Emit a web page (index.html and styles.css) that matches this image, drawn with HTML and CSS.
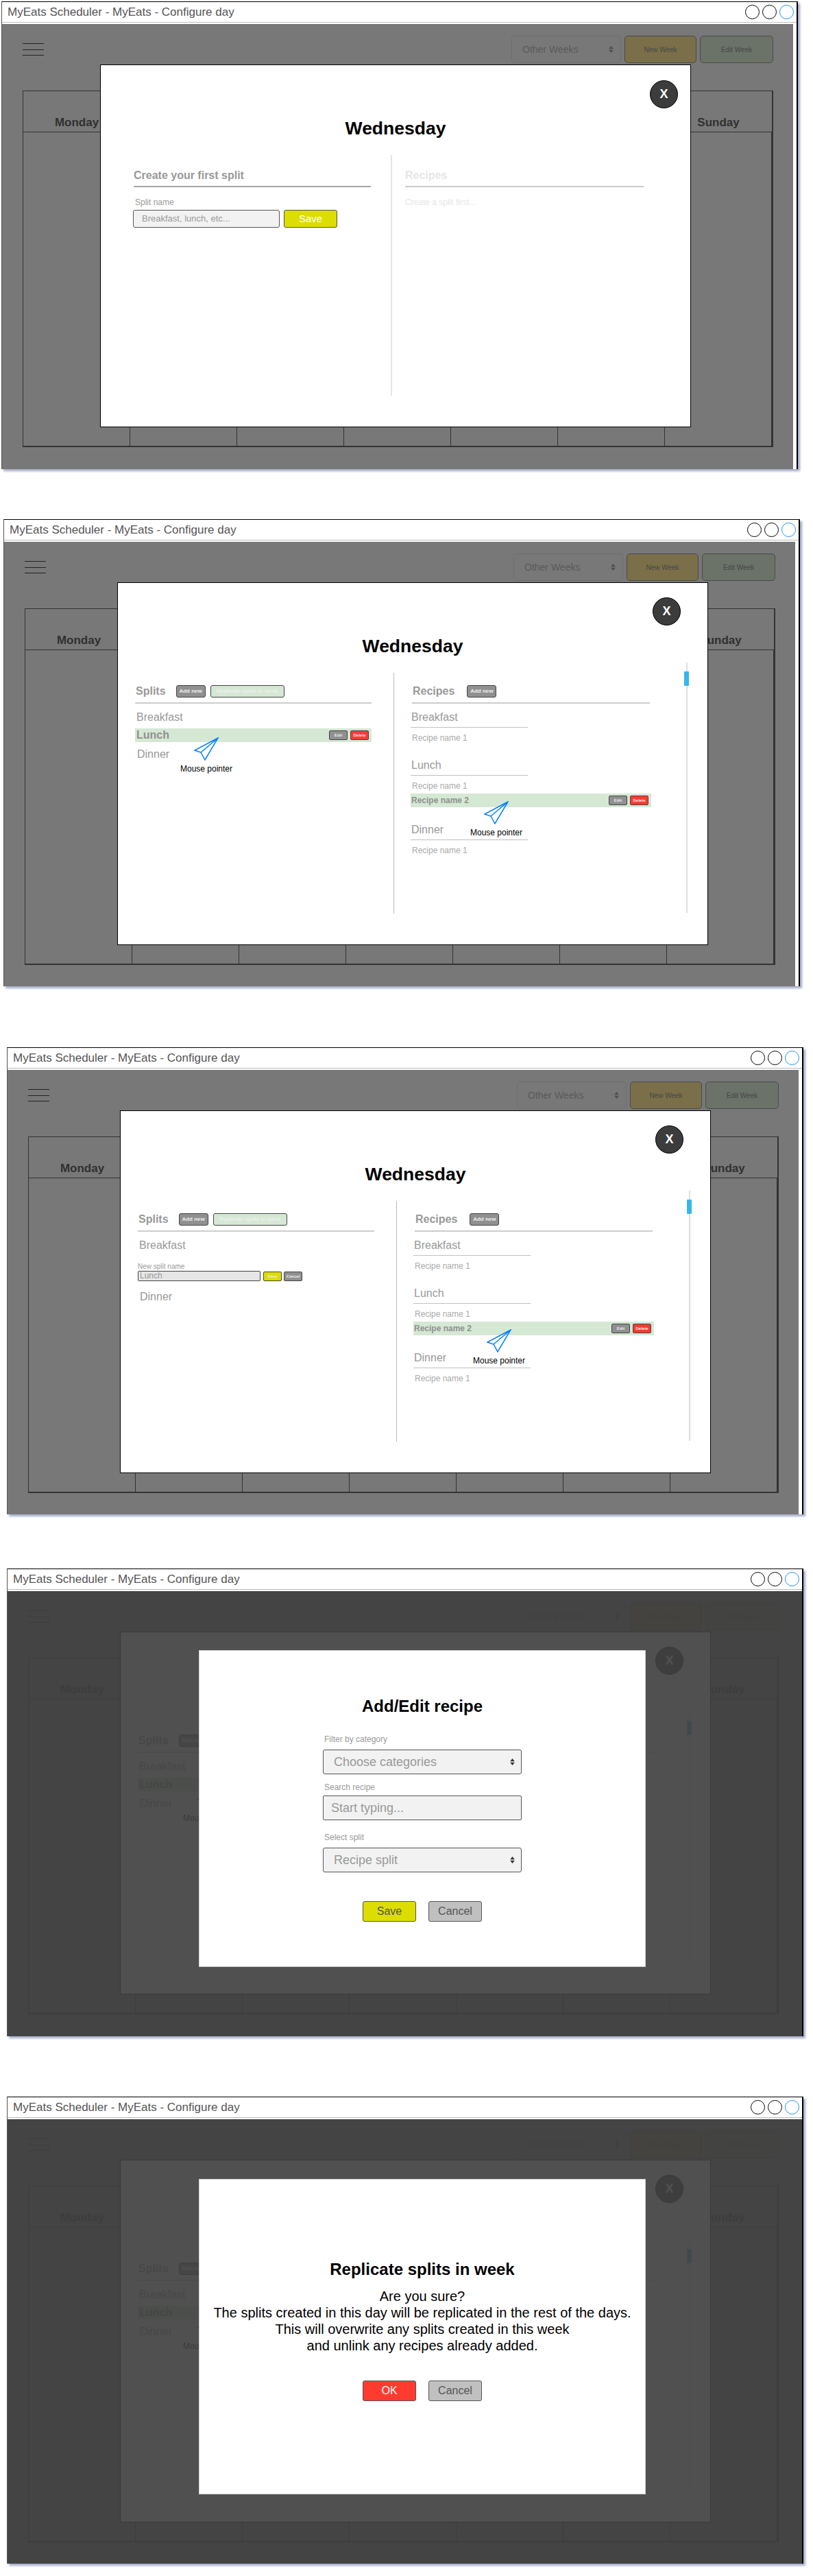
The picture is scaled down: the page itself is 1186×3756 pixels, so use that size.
FILE: index.html
```html
<!DOCTYPE html>
<html lang="en">
<head>
<meta charset="utf-8">
<title>MyEats Scheduler - Configure day</title>
<link rel="stylesheet" href="styles.css">
</head>
<body>

<section class="frame f1">
  <header class="titlebar"><span class="title-text">MyEats Scheduler - MyEats - Configure day</span><span class="dots"><i class="dot"></i><i class="dot"></i><i class="dot dot-blue"></i></span></header>
  <div class="content">
    <div class="toolbar">
      <div class="burger"><i></i><i></i><i></i></div>
      <div class="tools">
        <div class="week-select"><span>Other Weeks</span><svg class="updown" viewBox="0 0 8 12"><path d="M4 0 8 5H0ZM4 12 0 7H8Z"/></svg></div>
        <div class="tool-btn tool-new">New Week</div>
        <div class="tool-btn tool-edit">Edit Week</div>
      </div>
    </div>
    <div class="week">
      <div class="day">Monday</div><div class="day"></div><div class="day"></div><div class="day"></div><div class="day"></div><div class="day"></div><div class="day">Sunday</div>
      <div class="cell"></div><div class="cell"></div><div class="cell"></div><div class="cell"></div><div class="cell"></div><div class="cell"></div><div class="cell"></div>
    </div>
    <div class="modal modal-first">
      <div class="close close-first">X</div>
      <h2 class="modal-title">Wednesday</h2>
      <div class="cols cols-first">
        <div class="col-left">
          <h3 class="first-head">Create your first split</h3>
          <div class="first-label">Split name</div>
          <div class="first-form"><div class="first-input">Breakfast, lunch, etc...</div><div class="first-save">Save</div></div>
        </div>
        <div class="col-right">
          <h3 class="first-head first-head-off">Recipes</h3>
          <div class="first-label first-label-off">Create a split first...</div>
        </div>
      </div>
    </div>
  </div>
</section>

<section class="frame f2">
  <header class="titlebar"><span class="title-text">MyEats Scheduler - MyEats - Configure day</span><span class="dots"><i class="dot"></i><i class="dot"></i><i class="dot dot-blue"></i></span></header>
  <div class="content">
    <div class="toolbar">
      <div class="burger"><i></i><i></i><i></i></div>
      <div class="tools">
        <div class="week-select"><span>Other Weeks</span><svg class="updown" viewBox="0 0 8 12"><path d="M4 0 8 5H0ZM4 12 0 7H8Z"/></svg></div>
        <div class="tool-btn tool-new">New Week</div>
        <div class="tool-btn tool-edit">Edit Week</div>
      </div>
    </div>
    <div class="week">
      <div class="day">Monday</div><div class="day"></div><div class="day"></div><div class="day"></div><div class="day"></div><div class="day"></div><div class="day">Sunday</div>
      <div class="cell"></div><div class="cell"></div><div class="cell"></div><div class="cell"></div><div class="cell"></div><div class="cell"></div><div class="cell"></div>
    </div>
    <div class="modal">
      <div class="close">X</div>
      <h2 class="modal-title">Wednesday</h2>
      <div class="cols">
        <div class="col-left">
          <div class="panel-head"><h3 class="panel-title">Splits</h3><span class="mini mini-grey">Add new</span><span class="mini mini-green">Replicate splits in week</span></div>
          <div class="split-list">
            <div class="split">Breakfast</div>
            <div class="split split-hover"><b>Lunch</b><span class="row-btns"><span class="tiny tiny-grey">Edit</span><span class="tiny tiny-red">Delete</span></span></div>
            <div class="split split-dinner">Dinner</div>
          </div>
        </div>
        <div class="col-right">
          <div class="panel-head"><h3 class="panel-title panel-title-wide">Recipes</h3><span class="mini mini-grey">Add new</span></div>
          <div class="recipes">
            <div class="group"><h4 class="group-name">Breakfast</h4><div class="recipe">Recipe name 1</div></div>
            <div class="group"><h4 class="group-name">Lunch</h4><div class="recipe">Recipe name 1</div><div class="recipe recipe-hover"><b>Recipe name 2</b><span class="row-btns"><span class="tiny tiny-grey">Edit</span><span class="tiny tiny-red">Delete</span></span></div></div>
            <div class="group"><h4 class="group-name">Dinner</h4><div class="recipe">Recipe name 1</div></div>
          </div>
        </div>
      </div>
      <div class="track"><div class="thumb"></div></div>
      <div class="cursor cursor-split"><svg class="arrow" viewBox="0 0 36 34"><path d="M35 1 1 19 10 22 16 33ZM35 1 10 22"/></svg><span class="cursor-label">Mouse pointer</span></div>
      <div class="cursor cursor-recipe"><svg class="arrow" viewBox="0 0 36 34"><path d="M35 1 1 19 10 22 16 33ZM35 1 10 22"/></svg><span class="cursor-label">Mouse pointer</span></div>
    </div>
  </div>
</section>

<section class="frame f3">
  <header class="titlebar"><span class="title-text">MyEats Scheduler - MyEats - Configure day</span><span class="dots"><i class="dot"></i><i class="dot"></i><i class="dot dot-blue"></i></span></header>
  <div class="content">
    <div class="toolbar">
      <div class="burger"><i></i><i></i><i></i></div>
      <div class="tools">
        <div class="week-select"><span>Other Weeks</span><svg class="updown" viewBox="0 0 8 12"><path d="M4 0 8 5H0ZM4 12 0 7H8Z"/></svg></div>
        <div class="tool-btn tool-new">New Week</div>
        <div class="tool-btn tool-edit">Edit Week</div>
      </div>
    </div>
    <div class="week">
      <div class="day">Monday</div><div class="day"></div><div class="day"></div><div class="day"></div><div class="day"></div><div class="day"></div><div class="day">Sunday</div>
      <div class="cell"></div><div class="cell"></div><div class="cell"></div><div class="cell"></div><div class="cell"></div><div class="cell"></div><div class="cell"></div>
    </div>
    <div class="modal modal-b">
      <div class="close">X</div>
      <h2 class="modal-title">Wednesday</h2>
      <div class="cols">
        <div class="col-left">
          <div class="panel-head"><h3 class="panel-title">Splits</h3><span class="mini mini-grey">Add new</span><span class="mini mini-green">Replicate splits in week</span></div>
          <div class="split-list">
            <div class="split">Breakfast</div>
            <div class="split-form">
              <div class="split-form-label">New split name</div>
              <div class="split-form-row"><div class="split-input">Lunch</div><span class="tiny tiny-yellow">Save</span><span class="tiny tiny-grey">Cancel</span></div>
            </div>
            <div class="split split-dinner">Dinner</div>
          </div>
        </div>
        <div class="col-right">
          <div class="panel-head"><h3 class="panel-title panel-title-wide">Recipes</h3><span class="mini mini-grey">Add new</span></div>
          <div class="recipes">
            <div class="group"><h4 class="group-name">Breakfast</h4><div class="recipe">Recipe name 1</div></div>
            <div class="group"><h4 class="group-name">Lunch</h4><div class="recipe">Recipe name 1</div><div class="recipe recipe-hover"><b>Recipe name 2</b><span class="row-btns"><span class="tiny tiny-grey">Edit</span><span class="tiny tiny-red">Delete</span></span></div></div>
            <div class="group"><h4 class="group-name">Dinner</h4><div class="recipe">Recipe name 1</div></div>
          </div>
        </div>
      </div>
      <div class="track"><div class="thumb"></div></div>
      <div class="cursor cursor-recipe"><svg class="arrow" viewBox="0 0 36 34"><path d="M35 1 1 19 10 22 16 33ZM35 1 10 22"/></svg><span class="cursor-label">Mouse pointer</span></div>
    </div>
  </div>
</section>

<section class="frame frame-dim f4">
  <header class="titlebar"><span class="title-text">MyEats Scheduler - MyEats - Configure day</span><span class="dots"><i class="dot"></i><i class="dot"></i><i class="dot dot-blue"></i></span></header>
  <div class="content">
    <div class="toolbar">
      <div class="burger"><i></i><i></i><i></i></div>
      <div class="tools">
        <div class="week-select"><span>Other Weeks</span><svg class="updown" viewBox="0 0 8 12"><path d="M4 0 8 5H0ZM4 12 0 7H8Z"/></svg></div>
        <div class="tool-btn tool-new">New Week</div>
        <div class="tool-btn tool-edit">Edit Week</div>
      </div>
    </div>
    <div class="week">
      <div class="day">Monday</div><div class="day"></div><div class="day"></div><div class="day"></div><div class="day"></div><div class="day"></div><div class="day">Sunday</div>
      <div class="cell"></div><div class="cell"></div><div class="cell"></div><div class="cell"></div><div class="cell"></div><div class="cell"></div><div class="cell"></div>
    </div>
    <div class="modal modal-b">
      <div class="close">X</div>
      <h2 class="modal-title"></h2>
      <div class="cols">
        <div class="col-left">
          <div class="panel-head"><h3 class="panel-title">Splits</h3><span class="mini mini-grey">Add new</span></div>
          <div class="split-list">
            <div class="split">Breakfast</div>
            <div class="split split-hover"><b>Lunch</b></div>
            <div class="split split-dinner">Dinner</div>
          </div>
        </div>
        <div class="col-right"><div class="panel-head"></div></div>
      </div>
      <div class="track"><div class="thumb"></div></div>
      <div class="cursor cursor-split"><svg class="arrow" viewBox="0 0 36 34"><path d="M35 1 1 19 10 22 16 33ZM35 1 10 22"/></svg><span class="cursor-label">Mouse pointer</span></div>
    </div>
  </div>
  <div class="scrim">
    <div class="dialog dialog-recipe">
      <h2 class="dialog-title">Add/Edit recipe</h2>
      <div class="form">
        <label class="form-label">Filter by category</label>
        <div class="field field-select"><span>Choose categories</span><svg class="updown updown-dark" viewBox="0 0 8 12"><path d="M4 0 8 5H0ZM4 12 0 7H8Z"/></svg></div>
        <label class="form-label form-label-search">Search recipe</label>
        <div class="field field-input"><span>Start typing...</span></div>
        <label class="form-label form-label-split">Select split</label>
        <div class="field field-select"><span>Recipe split</span><svg class="updown updown-dark" viewBox="0 0 8 12"><path d="M4 0 8 5H0ZM4 12 0 7H8Z"/></svg></div>
      </div>
      <div class="dialog-actions"><div class="action action-yellow">Save</div><div class="action action-grey">Cancel</div></div>
    </div>
  </div>
</section>

<section class="frame frame-dim f5">
  <header class="titlebar"><span class="title-text">MyEats Scheduler - MyEats - Configure day</span><span class="dots"><i class="dot"></i><i class="dot"></i><i class="dot dot-blue"></i></span></header>
  <div class="content">
    <div class="toolbar">
      <div class="burger"><i></i><i></i><i></i></div>
      <div class="tools">
        <div class="week-select"><span>Other Weeks</span><svg class="updown" viewBox="0 0 8 12"><path d="M4 0 8 5H0ZM4 12 0 7H8Z"/></svg></div>
        <div class="tool-btn tool-new">New Week</div>
        <div class="tool-btn tool-edit">Edit Week</div>
      </div>
    </div>
    <div class="week">
      <div class="day">Monday</div><div class="day"></div><div class="day"></div><div class="day"></div><div class="day"></div><div class="day"></div><div class="day">Sunday</div>
      <div class="cell"></div><div class="cell"></div><div class="cell"></div><div class="cell"></div><div class="cell"></div><div class="cell"></div><div class="cell"></div>
    </div>
    <div class="modal modal-b">
      <div class="close">X</div>
      <h2 class="modal-title"></h2>
      <div class="cols">
        <div class="col-left">
          <div class="panel-head"><h3 class="panel-title">Splits</h3><span class="mini mini-grey">Add new</span></div>
          <div class="split-list">
            <div class="split">Breakfast</div>
            <div class="split split-hover"><b>Lunch</b></div>
            <div class="split split-dinner">Dinner</div>
          </div>
        </div>
        <div class="col-right"><div class="panel-head"></div></div>
      </div>
      <div class="track"><div class="thumb"></div></div>
      <div class="cursor cursor-split"><svg class="arrow" viewBox="0 0 36 34"><path d="M35 1 1 19 10 22 16 33ZM35 1 10 22"/></svg><span class="cursor-label">Mouse pointer</span></div>
    </div>
  </div>
  <div class="scrim">
    <div class="dialog dialog-confirm">
      <h2 class="dialog-title">Replicate splits in week</h2>
      <p class="confirm-text">Are you sure?<br>The splits created in this day will be replicated in the rest of the days.<br>This will overwrite any splits created in this week<br>and unlink any recipes already added.</p>
      <div class="dialog-actions dialog-actions-confirm"><div class="action action-red">OK</div><div class="action action-grey">Cancel</div></div>
    </div>
  </div>
</section>

</body>
</html>
```
FILE: styles.css
```css
* { box-sizing: border-box; }
html, body { margin: 0; padding: 0; background: #fff; }
body { height: 3756px; font-family: "Liberation Sans", Arial, sans-serif; overflow: hidden; }
h2, h3, h4, p { margin: 0; }

.frame {
  position: relative;
  width: 1162px;
  display: flex;
  flex-direction: column;
  background: #fff;
  border-top: 1px solid #000;
  border-left: 1px solid #555;
  border-right: 2px solid #000;
  box-shadow: 3px 3px 3px #a4abc8;
}
.f1 { margin: 2px 0 0 2px; height: 682px; }
.f2 { margin: 73px 0 0 5px; height: 681px; }
.f3 { margin: 89px 0 0 10px; height: 681px; }
.f4 { margin: 79px 0 0 10px; height: 682px; }
.f5 { margin: 88px 0 0 10px; height: 681px; }

.titlebar {
  flex: none;
  height: 30px;
  margin-bottom: 2px;
  padding: 0 4px 0 8px;
  display: flex;
  align-items: center;
  justify-content: space-between;
  border-bottom: 1px solid #bbb;
}
.title-text { font-size: 17px; color: #555; white-space: nowrap; }
.dots { display: flex; gap: 4px; }
.dot { display: block; width: 21px; height: 21px; border: 1px solid #000; border-radius: 50%; background: #fff; }
.dot-blue { border-color: #1e90ff; }

.content {
  position: relative;
  flex: 1;
  background: #787878;
  border-right: 5px solid #fff;
  padding: 17px 29px 0 30px;
  overflow: hidden;
}
.frame-dim .content { border-right-color: #787878; }

.toolbar { display: flex; justify-content: space-between; align-items: center; height: 40px; }
.burger { width: 31px; height: 18px; display: flex; flex-direction: column; justify-content: space-between; }
.burger i { display: block; height: 1px; background: #222; }
.tools { display: flex; gap: 5px; }
.week-select {
  width: 160px;
  height: 40px;
  padding: 0 10px 0 15px;
  display: flex;
  align-items: center;
  justify-content: space-between;
  border: 1px solid #6e6e6e;
  border-radius: 5px;
  font-size: 14px;
  color: #5a5a5a;
}
.updown { width: 7px; height: 10px; fill: #4e4e4e; }
.tool-btn {
  height: 40px;
  display: flex;
  align-items: center;
  justify-content: center;
  border: 1px solid #4a4a4a;
  border-radius: 5px;
  font-size: 10px;
  color: #474747;
}
.tool-new { width: 105px; background: #7a6f49; }
.tool-edit { width: 107px; background: #6b7268; }

.week {
  margin-top: 40px;
  width: 1095px;
  height: 520px;
  display: grid;
  grid-template-columns: repeat(7, 156px);
  grid-template-rows: 60px 1fr;
  border: 1px solid #333;
  border-right-width: 2px;
  border-bottom-width: 2px;
}
.day {
  display: flex;
  align-items: flex-end;
  justify-content: center;
  padding-bottom: 3px;
  line-height: 20px;
  font-size: 17px;
  font-weight: bold;
  color: #303030;
  border-bottom: 1px solid #333;
}
.cell { border-right: 1px solid #333; }

.modal {
  position: absolute;
  left: 165px;
  top: 59px;
  width: 862px;
  height: 529px;
  background: #fff;
  border: 1px solid #000;
}
.modal-first { left: 143px; }
.modal-b { left: 164px; }
.close {
  position: absolute;
  left: 780px;
  top: 21px;
  width: 41px;
  height: 41px;
  border-radius: 50%;
  background: #3c3c3c;
  border: 1px solid #000;
  display: flex;
  align-items: center;
  justify-content: center;
  color: #fff;
  font-size: 18px;
  font-weight: bold;
}
.close-first { left: 801px; top: 22px; }
.modal-title {
  margin-top: 77px;
  height: 30px;
  line-height: 30px;
  text-align: center;
  font-size: 26.5px;
  color: #000;
}
.cols { display: flex; height: 351px; margin-top: 24px; padding-left: 25px; }
.col-left { width: 345px; margin-right: 32px; padding-top: 18px; }
.col-right { width: 374px; border-left: 1px solid #bbb; padding: 18px 0 0 26px; }

.cols-first { padding-left: 48px; }
.cols-first .col-left { width: 346px; margin-right: 29px; }
.cols-first .col-right { width: 369px; border-left: 2px solid #e6e6e6; padding-left: 19px; }
.first-head {
  height: 29px;
  line-height: 24px;
  font-size: 16px;
  font-weight: bold;
  color: #999;
  border-bottom: 2px solid #a6a6a6;
}
.first-head-off { color: #e6e6e6; border-bottom-color: #ccc; }
.first-label { margin: 15px 0 4px 2px; line-height: 14px; font-size: 12px; color: #999; }
.first-label-off { margin-left: 0; color: #e6e6e6; }
.first-form { display: flex; gap: 6px; margin-left: -1px; }
.first-input {
  width: 214px;
  height: 26px;
  padding-left: 12px;
  line-height: 24px;
  font-size: 13px;
  color: #999;
  background: #f2f2f2;
  border: 1px solid #555;
  border-radius: 3px;
}
.first-save {
  width: 78px;
  height: 26px;
  line-height: 24px;
  text-align: center;
  font-size: 15px;
  color: #fff;
  background: #dddd00;
  border: 1px solid #555;
  border-radius: 3px;
}

.panel-head {
  display: flex;
  align-items: center;
  gap: 7px;
  height: 27px;
  padding-bottom: 7px;
  border-bottom: 2px solid #ccc;
}
.panel-title { padding-left: 1px; margin-right: 8px; font-size: 16px; font-weight: bold; color: #999; }
.panel-title-wide { margin-right: 11px; }
.mini {
  height: 18px;
  line-height: 16px;
  text-align: center;
  font-size: 8px;
  font-weight: bold;
  border: 1px solid #444;
  border-radius: 3px;
  color: #eee;
}
.mini-grey { width: 43px; background: #909090; }
.mini-green { width: 108px; background: #d5e8d4; }

.split-list { display: flex; flex-direction: column; gap: 6px; padding-top: 10px; }
.split { height: 20px; line-height: 20px; padding-left: 2px; font-size: 16px; color: #999; }
.split-dinner { margin-top: 2px; padding-left: 3px; }
.split-hover {
  display: flex;
  align-items: center;
  justify-content: space-between;
  background: #d5e8d4;
  color: #909090;
}
.row-btns { display: flex; gap: 4px; padding-right: 4px; }
.tiny {
  width: 27px;
  height: 14px;
  line-height: 12px;
  text-align: center;
  font-size: 6px;
  font-weight: bold;
  border: 1px solid #444;
  border-radius: 2px;
  color: #eee;
}
.tiny-grey { background: #909090; }
.tiny-red { background: #ff3b30; }
.tiny-yellow { background: #dddd00; }
.split-form { padding: 9px 0 5px; }
.split-form-label { line-height: 12px; font-size: 10px; color: #999; }
.split-form-row { display: flex; align-items: center; gap: 3px; }
.split-input {
  width: 179px;
  height: 15px;
  margin-right: 1px;
  padding-left: 2px;
  line-height: 13px;
  font-size: 12px;
  color: #999;
  background: #e6e6e6;
  border: 1px solid #444;
  border-radius: 2px;
}

.recipes { padding-top: 10px; }
.group { padding-bottom: 20px; }
.group-name {
  width: 171px;
  height: 25px;
  margin-left: -2px;
  padding-left: 1px;
  line-height: 20px;
  font-size: 16px;
  font-weight: normal;
  color: #999;
  border-bottom: 1px solid #c0c0c0;
}
.recipe { height: 20px; margin-top: 5px; line-height: 20px; font-size: 12px; color: #aaa; }
.recipe-hover {
  display: flex;
  align-items: center;
  justify-content: space-between;
  width: 351px;
  margin: 1px 0 3px -2px;
  padding-left: 1px;
  background: #d5e8d4;
  color: #909090;
}

.track { position: absolute; left: 829px; top: 116px; width: 2px; height: 365px; background: #ddd; }
.thumb { position: absolute; left: -3px; top: 13px; width: 7px; height: 21px; background: #38b6e8; border-radius: 1px; }

.cursor { position: absolute; width: 76px; display: flex; flex-direction: column; align-items: center; }
.cursor-split { left: 91px; top: 225px; }
.cursor-recipe { left: 514px; top: 318px; }
.arrow { width: 36px; height: 34px; fill: none; stroke: #007fff; stroke-width: 1.5; }
.cursor-label { margin-top: 5px; line-height: 14px; font-size: 12px; color: #000; white-space: nowrap; }

.scrim {
  position: absolute;
  left: 0;
  right: 0;
  top: 32px;
  bottom: 0;
  background: rgba(63, 63, 63, 0.91);
}
.dialog {
  position: absolute;
  left: 279px;
  width: 652px;
  background: #fff;
  border: 1px solid #ccc;
}
.dialog-recipe { top: 86px; height: 462px; padding-top: 66px; }
.dialog-confirm { top: 87px; height: 460px; padding-top: 116px; }
.dialog-title { height: 30px; line-height: 30px; text-align: center; font-size: 24px; color: #000; }

.form { width: 290px; margin: 26px auto 0; }
.form-label { display: block; margin-bottom: 8px; padding-left: 2px; line-height: 14px; font-size: 12px; color: #999; }
.form-label-search { margin: 12px 0 5px; }
.form-label-split { margin: 18px 0 8px; }
.field {
  height: 36px;
  display: flex;
  align-items: center;
  justify-content: space-between;
  padding: 0 9px 0 15px;
  font-size: 18px;
  color: #999;
  background: #f2f2f2;
  border: 1px solid #555;
  border-radius: 3px;
}
.field-input { padding-left: 11px; border-radius: 2px; }
.updown-dark { fill: #333; }
.dialog-actions { display: flex; justify-content: center; gap: 18px; margin-top: 42px; }
.dialog-actions-confirm { margin-top: 39px; }
.action {
  width: 78px;
  height: 30px;
  line-height: 28px;
  text-align: center;
  font-size: 16px;
  border: 1px solid #555;
  border-radius: 3px;
}
.action-yellow { background: #dddd00; color: #555; }
.action-grey { background: #c0c0c0; color: #555; }
.action-red { background: #ff3b30; color: #fff; }
.confirm-text { margin-top: 12px; line-height: 24px; text-align: center; font-size: 20px; color: #000; }
```
